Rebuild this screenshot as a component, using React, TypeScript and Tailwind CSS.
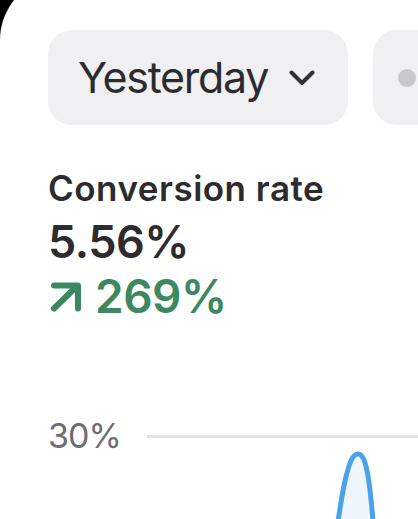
import React from 'react'

const font = { fontFamily: 'Inter, "Noto Sans", sans-serif' }

function Chevron() {
  return (
    <svg width="26" height="16" viewBox="0 0 26 16" fill="none">
      <path d="M2.5 2.5 L13 13 L23.5 2.5" stroke="#333336" strokeWidth="4" strokeLinecap="round" strokeLinejoin="round" />
    </svg>
  )
}

function UpArrow() {
  return (
    <svg width="34" height="34" viewBox="0 0 34 34" fill="none">
      <path d="M6 28.5 L28 7" stroke="#3b8761" strokeWidth="6" strokeLinecap="round" />
      <path d="M6 5.5 H30 V28.5" stroke="#3b8761" strokeWidth="6" strokeLinecap="round" strokeLinejoin="round" />
    </svg>
  )
}

export default function App() {
  return (
    <div className="h-[519px] w-[418px] overflow-hidden bg-black" style={font}>
      <div className="-mt-6 h-[543px] rounded-tl-[64px] bg-white pl-12 pt-[54px]">
        <div className="flex gap-[25px] overflow-hidden">
          <button className="flex h-[95px] w-[300px] shrink-0 items-center gap-[21px] rounded-[24px] bg-[#f0f0f2] px-[30px] text-[43px] tracking-[-1.3px] text-[#2c2c2e]">
            <span>Yesterday</span>
            <Chevron />
          </button>
          <div className="flex h-[95px] w-[200px] shrink-0 items-center rounded-[24px] bg-[#f0f0f2] pl-[25px]">
            <span className="h-[18px] w-[18px] rounded-full bg-[#c9c9cc]" />
          </div>
        </div>

        <div className="mt-[39px] text-[#2c2c2e]">
          <div className="text-[35px] font-semibold leading-[48px] tracking-[0.5px]">Conversion rate</div>
          <div className="text-[45px] font-semibold leading-[60px] tracking-[-0.5px]">5.56%</div>
          <div className="flex items-center gap-[13px] text-[46px] font-semibold leading-[49px] tracking-[-0.5px] text-[#3d8860]">
            <UpArrow />
            <span>269%</span>
          </div>
        </div>

        <div className="relative mt-[94px]">
          <div className="flex h-[42px] items-center">
            <span className="w-[99px] shrink-0 text-[34px] leading-[42px] tracking-[-1px] text-[#6e6e73]">30%</span>
            <div className="h-[3px] flex-1 bg-[#e3e3e5]" />
          </div>
          <svg className="absolute left-[99px] top-[22px]" width="271" height="110" viewBox="0 0 271 110" fill="none">
            <path d="M184 140 C195 45, 202 17, 211 17 C220 17, 224 45, 230 140 Z" fill="#eef5fc" />
            <path d="M184 140 C195 45, 202 17, 211 17 C220 17, 224 45, 230 140" stroke="#4aa3e8" strokeWidth="5" strokeLinecap="round" />
          </svg>
        </div>
      </div>
    </div>
  )
}
